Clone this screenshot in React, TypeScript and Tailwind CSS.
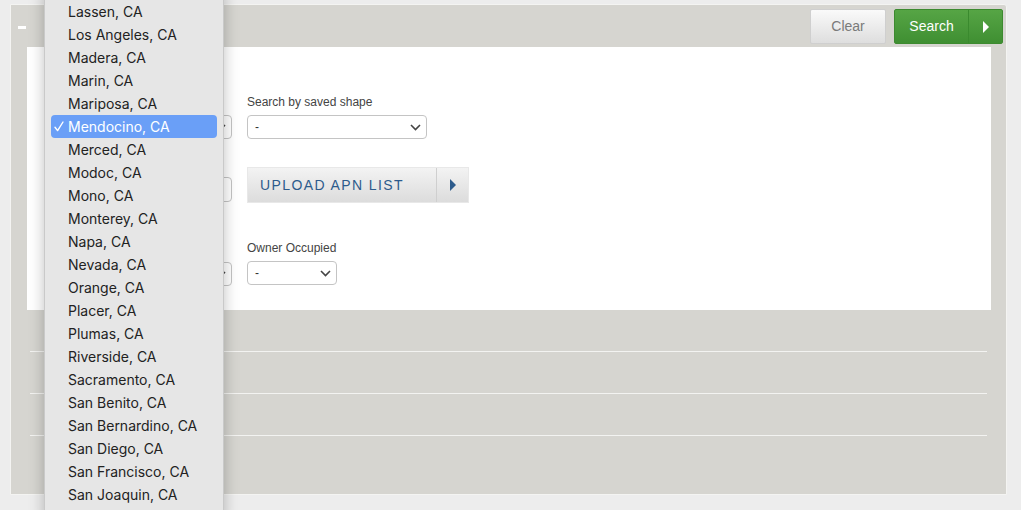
const counties = [
  'Lassen, CA',
  'Los Angeles, CA',
  'Madera, CA',
  'Marin, CA',
  'Mariposa, CA',
  'Mendocino, CA',
  'Merced, CA',
  'Modoc, CA',
  'Mono, CA',
  'Monterey, CA',
  'Napa, CA',
  'Nevada, CA',
  'Orange, CA',
  'Placer, CA',
  'Plumas, CA',
  'Riverside, CA',
  'Sacramento, CA',
  'San Benito, CA',
  'San Bernardino, CA',
  'San Diego, CA',
  'San Francisco, CA',
  'San Joaquin, CA',
]

function Chevron() {
  return (
    <svg width="11" height="7" viewBox="0 0 11 7" className="shrink-0">
      <path d="M1 1l4.5 4.5L10 1" fill="none" stroke="#444" strokeWidth="1.6" />
    </svg>
  )
}

function FakeSelect({ width, value = '-' }: { width: string; value?: string }) {
  return (
    <div
      className={`${width} h-[24px] flex items-center justify-between pl-[7px] pr-[5px] bg-white border border-[#c4c4c4] rounded-[4px] text-[12px] text-[#333]`}
    >
      <span>{value}</span>
      <Chevron />
    </div>
  )
}

function Field({ label, width }: { label: string; width: string }) {
  return (
    <div className="flex flex-col gap-[6px]">
      <span className="text-[12px] text-[#444] leading-[14px]">{label}</span>
      <FakeSelect width={width} />
    </div>
  )
}

export default function App() {
  return (
    <div
      className="relative w-[1021px] h-[510px] overflow-hidden bg-[#ededed] pt-[4px] px-[10px]"
      style={{ fontFamily: "'Liberation Sans', Arial, sans-serif" }}
    >
      {/* outer panel */}
      <div className="h-[491px] w-[997px] bg-[#d6d5d0] border border-[#f4f4f2] rounded-tr-[3px] flex flex-col">
        {/* header */}
        <div className="h-[42px] flex items-start justify-between pl-[7px] pr-[3px] pt-[4px]">
          <div className="mt-[17px] w-[8px] h-[3px] bg-white" />
          <div className="flex gap-[8px]">
            <button className="w-[76px] h-[35px] rounded-[2px] border border-[#cfcfcf] bg-gradient-to-b from-[#fafafa] to-[#dedede] text-[14px] text-[#7a7a7a]">
              Clear
            </button>
            <button className="w-[109px] h-[35px] rounded-[2px] flex items-stretch bg-gradient-to-b from-[#56a545] to-[#3f8f32] border border-[#3d8a30] text-white text-[14px]">
              <span className="flex-1 flex items-center justify-center border-r border-[#3a8a2e]">Search</span>
              <span className="w-[33px] flex items-center justify-center">
                <svg width="6" height="12" viewBox="0 0 6 12">
                  <path d="M0 0L6 6L0 12Z" fill="#fff" />
                </svg>
              </span>
            </button>
          </div>
        </div>

        {/* white form area */}
        <div className="ml-[16px] mr-[15px] h-[263px] bg-white pt-[48px] pl-[24px]">
          <div className="flex gap-[15px]">
            {/* left column, mostly hidden under the open menu */}
            <div className="w-[181px] flex flex-col">
              <div className="mt-[20px]">
                <FakeSelect width="w-[181px]" value="" />
              </div>
              <div className="mt-[38px] h-[25px] w-[181px] border border-[#c4c4c4] rounded-[4px]" />
              <div className="mt-[60px]">
                <FakeSelect width="w-[181px]" value="" />
              </div>
            </div>
            <div className="flex flex-col">
              <Field label="Search by saved shape" width="w-[180px]" />
              <button className="mt-[28px] w-[222px] h-[36px] flex items-stretch border border-[#e8e8e8] bg-gradient-to-b from-[#f3f3f3] to-[#dcdcdc] text-[#2d5b8c]">
                <span className="flex-1 flex items-center pl-[12px] text-[14px] tracking-[1.4px] border-r border-[#cfcfcf]">
                  UPLOAD APN LIST
                </span>
                <span className="w-[31px] flex items-center justify-center">
                  <svg width="6" height="12" viewBox="0 0 6 12">
                    <path d="M0 0L6 6L0 12Z" fill="#2d5b8c" />
                  </svg>
                </span>
              </button>
              <div className="mt-[38px]">
                <Field label="Owner Occupied" width="w-[90px]" />
              </div>
            </div>
          </div>
        </div>

        {/* collapsed rows */}
        <div className="mx-[19px] mt-[41px] flex flex-col">
          <div className="h-[42px] border-t border-[#f3f3f1]" />
          <div className="h-[42px] border-t border-[#f3f3f1]" />
          <div className="h-[42px] border-t border-[#f3f3f1]" />
        </div>
      </div>

      {/* open county dropdown menu */}
      <div
        className="absolute left-[44px] top-[-12px] w-[180px] h-[530px] bg-[#e6e6e6] border-x border-[#c9c9c9] shadow-[0_4px_14px_rgba(0,0,0,0.25)] px-[6px] pt-[12px]"
        style={{ fontFamily: "Inter, 'Noto Sans', sans-serif" }}
      >
        {counties.map(c => {
          const on = c === 'Mendocino, CA'
          return (
            <div
              key={c}
              className={`h-[23px] flex items-center rounded-[4px] text-[14px] ${
                on ? 'bg-[#6a9ff7] text-white' : 'text-[#222]'
              }`}
            >
              <span className="w-[17px] pl-[3px] flex items-center">
                {on && (
                  <svg width="10" height="11" viewBox="0 0 10 11">
                    <path d="M1 6.2L3.6 9.6L9 1" fill="none" stroke="#fff" strokeWidth="1.4" strokeLinecap="round" strokeLinejoin="round" />
                  </svg>
                )}
              </span>
              <span>{c}</span>
            </div>
          )
        })}
      </div>
    </div>
  )
}
